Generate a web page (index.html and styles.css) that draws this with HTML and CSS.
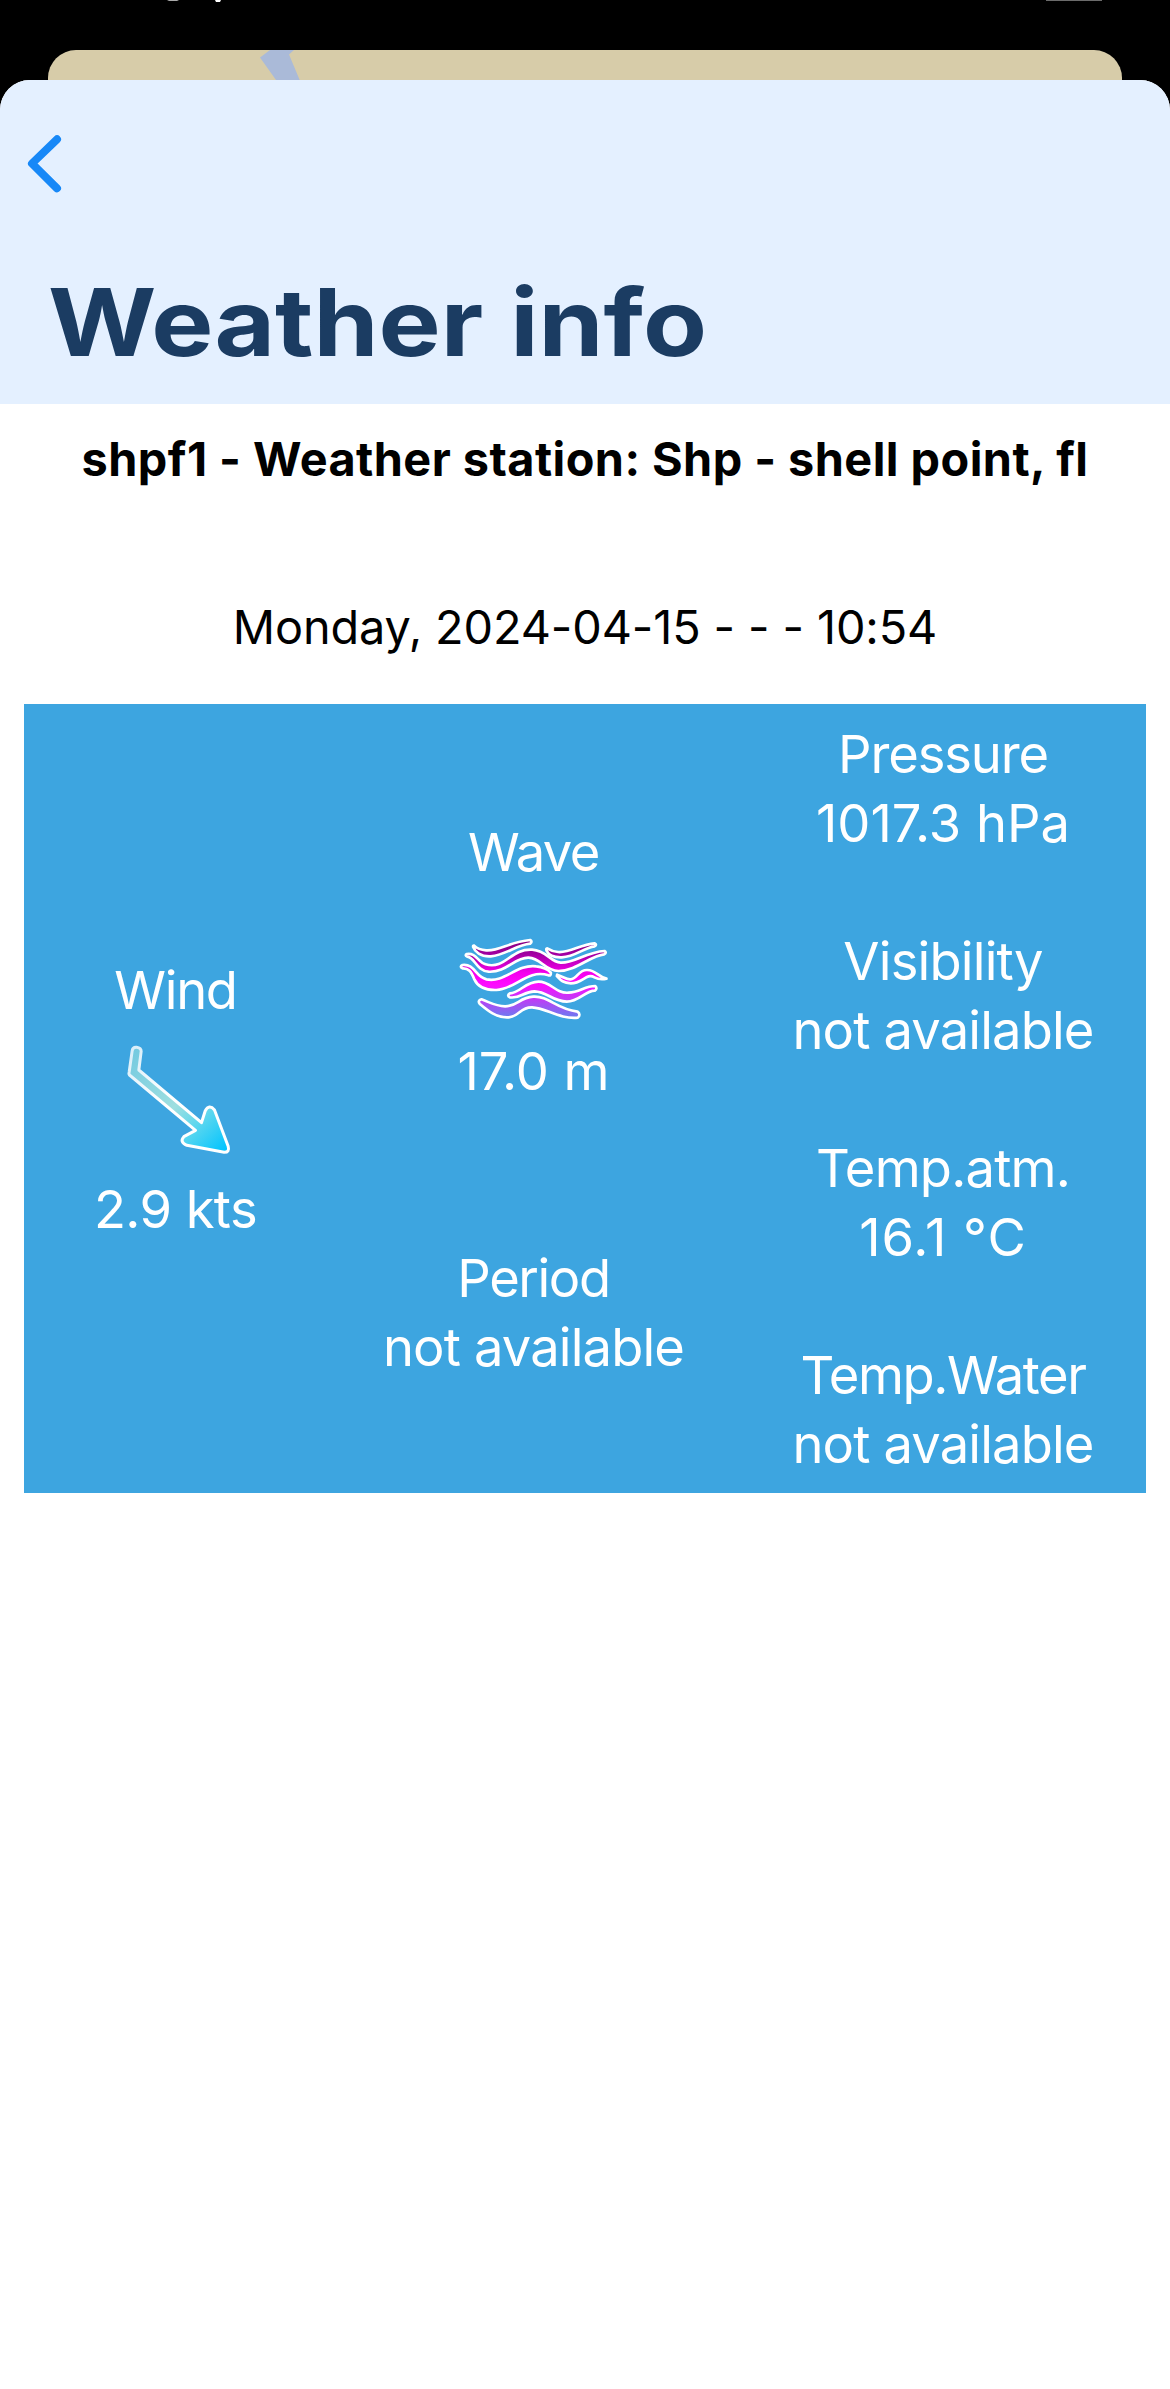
FILE: index.html
```html
<!DOCTYPE html>
<html lang="en">
<head>
<meta charset="utf-8">
<title>Weather info</title>
<link rel="stylesheet" href="styles.css">
</head>
<body>
<div class="status">
  <svg width="1170" height="50" viewBox="0 0 1170 50">
    <path d="M167 0h12l-2 1h-8z" fill="#aaa"/>
    <path d="M215 0h6l-1 2h-4z" fill="#fff"/>
    <path d="M1046 0h56v1h-56z" fill="#6b6b6b"/>
  </svg>
</div>
<div class="map">
  <svg width="1074" height="60" viewBox="48 50 1074 60">
    <path d="M260 57.5 270 50h24l-5 4.5L299.7 80V110H296L276 80z" fill="#aabad8"/>
  </svg>
</div>
<main class="sheet">
  <header class="header">
    <svg class="back" width="50" height="60" viewBox="20 134 50 60">
      <path d="M57 139.3 32 163.5 57 188.3"/>
    </svg>
    <h1 class="title">Weather info</h1>
  </header>
  <h2 class="station">shpf1 - Weather station: Shp - shell point, fl</h2>
  <p class="date">Monday, 2024-04-15 - - - 10:54</p>
  <section class="panel">
    <div class="column">
      <p class="wind">Wind</p>
      <svg class="icon" viewBox="31.5 223 450 450">
        <defs>
          <linearGradient id="shaft" gradientUnits="userSpaceOnUse" x1="120" y1="300" x2="405" y2="600">
            <stop offset="0" stop-color="#73c9e0"/><stop offset=".52" stop-color="#9edfe0"/>
            <stop offset=".72" stop-color="#5fd7ee"/><stop offset="1" stop-color="#00c4ff"/>
          </linearGradient>
          <linearGradient id="rim" gradientUnits="userSpaceOnUse" x1="120" y1="300" x2="300" y2="480">
            <stop offset="0" stop-color="#d9eef9"/><stop offset=".7" stop-color="#fff"/>
          </linearGradient>
        </defs>
        <path d="M125 303Q127 292 138 293Q152 295 152 305L145 361 333 519 344 484Q356 462 372 481L413 590Q418 608 401 608L289 587Q266 577 280 561L315 542 117 376Q114 372 116 367Z" fill="url(#shaft)" stroke="url(#rim)" stroke-width="9" stroke-linejoin="round"/>
      </svg>
      <p class="knots">2.9 kts</p>
    </div>
    <div class="column">
      <p class="wave">Wave</p>
      <svg class="icon waves" viewBox="55.5 -104 450 450">
        <defs>
          <linearGradient id="sea" gradientUnits="userSpaceOnUse" x1="0" y1="60" x2="0" y2="290">
            <stop offset="0" stop-color="#85007f"/><stop offset=".17" stop-color="#a000a0"/>
            <stop offset=".42" stop-color="#f500ee"/><stop offset=".57" stop-color="#ff0aff"/>
            <stop offset=".76" stop-color="#c13bf5"/><stop offset="1" stop-color="#6b7bf0"/>
          </linearGradient>
        </defs>
        <path d="M101 75Q113 87 137 89C178 92 204 64 269 58Q277 63 269 69C227 73 198 102 151 107C120 109 103 92 98 79Q97 74 101 75Z"/>
        <path d="M320 83Q334 92 353 94C389 97 419 71 462 68Q471 72 462 77C429 82 404 108 364 110C340 111 325 104 318 90Q316 83 320 83Z"/>
        <path d="M79 100C107 96 112 124 135 131C195 148 210 83 275 87C320 90 329 124 360 126C398 129 437 94 492 91Q500 96 491 101C449 105 409 150 354 151C310 149 303 113 264 111C221 110 199 156 144 153C107 150 103 109 80 108Q72 104 79 100Z"/>
        <path d="M66 133C104 129 103 168 138 176C194 187 227 130 287 137C309 139 325 149 331 156Q332 166 324 164C261 144 227 205 168 208C136 209 113 201 102 177C92 152 84 142 66 143Q56 138 66 133Z"/>
        <path d="M350 162C371 169 377 177 390 176C411 174 414 147 440 148C468 149 473 169 498 174C482 178 471 175 462 170C437 156 427 188 391 188C365 187 358 175 349 166Z"/>
        <path d="M208 218C239 217 254 183 294 183C333 183 344 219 384 216C418 214 433 196 464 196Q472 203 463 210C434 210 416 243 379 243C335 242 321 213 282 212C248 213 239 235 208 230Q198 225 208 218Z"/>
        <path d="M123 236C151 246 163 256 194 257C231 257 237 230 278 228C325 225 345 264 411 273Q422 281 412 291C356 296 317 262 275 260C240 258 237 287 205 290C167 293 138 267 118 250Q110 240 123 236Z"/>
      </svg>
      <p class="metres">17.0 m</p>
      <div class="entry period">
        <p class="plabel">Period</p>
        <p class="na">not available</p>
      </div>
    </div>
    <div class="column readings">
      <div class="entry"><p class="pressure">Pressure</p><p class="hpa">1017.3 hPa</p></div>
      <div class="entry"><p class="visibility">Visibility</p><p class="na">not available</p></div>
      <div class="entry"><p class="air">Temp.atm.</p><p class="degrees">16.1 °C</p></div>
      <div class="entry"><p class="water">Temp.Water</p><p class="na">not available</p></div>
    </div>
  </section>
</main>
</body>
</html>
```
FILE: styles.css
```css
* { box-sizing: border-box; }
body {
  margin: 0;
  width: 1170px;
  height: 2389px;
  overflow: hidden;
  background: #000;
  font-family: Inter, "Liberation Sans", sans-serif;
}
h1, h2, p { margin: 0; font-weight: 400; white-space: nowrap; }
svg { display: block; }
.status { height: 50px; }
.map {
  width: 1074px;
  height: 60px;
  margin: 0 auto -30px;
  border-radius: 28px 28px 0 0;
  background: #d7cca9;
  overflow: hidden;
}
.sheet {
  position: relative;
  height: 2309px;
  border-radius: 30px 30px 0 0;
  background: #fff;
  overflow: hidden;
}
.header { height: 324px; padding: 54px 0 0 20px; background: #e4f0ff; }
.back path {
  fill: none;
  stroke: #1788f7;
  stroke-width: 8;
  stroke-linecap: round;
  stroke-linejoin: round;
}
.title {
  width: max-content;
  margin: 69px 0 0 28px;
  color: #1b3c62;
  font-size: 93px;
  font-weight: 700;
  line-height: 119px;
  word-spacing: 2px;
  transform: scaleX(1.123);
  transform-origin: 0 50%;
}
.station {
  padding-top: 26px;
  font-size: 46.8px;
  font-weight: 700;
  line-height: 58px;
  letter-spacing: .46px;
  text-align: center;
}
.date {
  padding-top: 110px;
  font-size: 46.8px;
  line-height: 58px;
  letter-spacing: -.1px;
  text-align: center;
}
.panel {
  display: grid;
  grid-template-columns: 303px 413px 406px;
  height: 789px;
  margin: 48px 24px 0;
  background: #3da5e0;
  color: #fff;
  font-size: 52.5px;
  line-height: 69px;
  text-align: center;
}
.panel p { padding-top: 1px; margin-bottom: -1px; }
.column { display: flex; flex-direction: column; align-items: center; justify-content: center; }
.icon { width: 150px; height: 150px; overflow: visible; }
.waves path { fill: url(#sea); stroke: #fff; stroke-width: 8; stroke-linejoin: round; }
.period { margin-top: 138px; }
.readings { gap: 69px; }
.wind { letter-spacing: -1.3px; }
.knots { letter-spacing: -.6px; }
.wave { letter-spacing: -1.5px; }
.plabel { letter-spacing: -1.4px; }
.na { letter-spacing: -.85px; }
.pressure { letter-spacing: -1.15px; }
.visibility { letter-spacing: -.8px; }
.air { letter-spacing: -.8px; }
.degrees { letter-spacing: 1px; }
.water { letter-spacing: -1.4px; }
```
